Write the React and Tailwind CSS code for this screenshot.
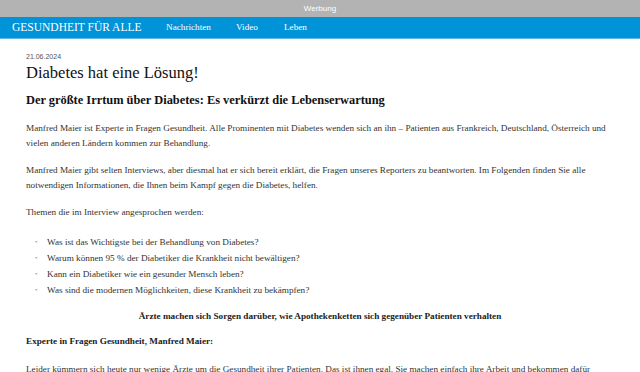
export default function App() {
  const serif = { fontFamily: '"Liberation Serif", serif' };
  return (
    <div className="w-[640px] h-[372px] overflow-hidden bg-white" style={serif}>
      <div className="h-[17px] bg-[#b3b3b3] flex items-center justify-center text-white text-[8px] font-['Liberation_Sans',sans-serif]">
        Werbung
      </div>
      <div className="h-[22px] bg-[#0093d8] border-b border-[#5fb7e6] flex items-center px-[12px] text-white">
        <div className="text-[11.5px] w-[154px]">GESUNDHEIT FÜR ALLE</div>
        <div className="text-[9.2px] flex">
          <span className="w-[70px]">Nachrichten</span>
          <span className="w-[48px]">Video</span>
          <span>Leben</span>
        </div>
      </div>
      <div className="px-[26px] text-[#333]">
        <div className="mt-[13px] text-[7px] text-[#555] font-['Liberation_Sans',sans-serif] leading-[9px]">21.06.2024</div>
        <h1 className="text-[16.5px] leading-[20px] text-[#111] mt-[2px]">Diabetes hat eine Lösung!</h1>
        <h2 className="text-[12.4px] leading-[16px] font-bold text-[#111] mt-[9px]">Der größte Irrtum über Diabetes: Es verkürzt die Lebenserwartung</h2>
        <p className="text-[9.2px] leading-[15px] mt-[13px]">
          Manfred Maier ist Experte in Fragen Gesundheit. Alle Prominenten mit Diabetes wenden sich an ihn – Patienten aus Frankreich, Deutschland, Österreich und vielen anderen Ländern kommen zur Behandlung.
        </p>
        <p className="text-[9.2px] leading-[15px] mt-[12px]">
          Manfred Maier gibt selten Interviews, aber diesmal hat er sich bereit erklärt, die Fragen unseres Reporters zu beantworten. Im Folgenden finden Sie alle notwendigen Informationen, die Ihnen beim Kampf gegen die Diabetes, helfen.
        </p>
        <p className="text-[9.2px] leading-[15px] mt-[12px]">Themen die im Interview angesprochen werden:</p>
        <ul className="text-[9.2px] leading-[16px] mt-[14px] pl-[9px]">
          {[
            'Was ist das Wichtigste bei der Behandlung von Diabetes?',
            'Warum können 95 % der Diabetiker die Krankheit nicht bewältigen?',
            'Kann ein Diabetiker wie ein gesunder Mensch leben?',
            'Was sind die modernen Möglichkeiten, diese Krankheit zu bekämpfen?',
          ].map((t) => (
            <li key={t} className="flex">
              <span className="w-[12px] text-[#999] text-[7px]">•</span>
              <span>{t}</span>
            </li>
          ))}
        </ul>
        <p className="text-[9.2px] leading-[15px] mt-[11px] font-bold text-center text-[#222]">
          Ärzte machen sich Sorgen darüber, wie Apothekenketten sich gegenüber Patienten verhalten
        </p>
        <p className="text-[9.2px] leading-[15px] mt-[10px] font-bold text-[#222]">Experte in Fragen Gesundheit, Manfred Maier:</p>
        <p className="text-[9.2px] leading-[15px] mt-[13px] pr-[20px]">
          Leider kümmern sich heute nur wenige Ärzte um die Gesundheit ihrer Patienten. Das ist ihnen egal. Sie machen einfach ihre Arbeit und bekommen dafür Geld.
        </p>
      </div>
    </div>
  );
}
